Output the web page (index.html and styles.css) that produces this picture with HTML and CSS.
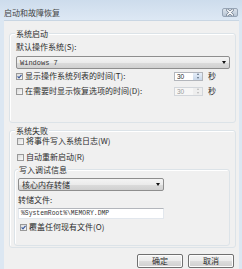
FILE: index.html
```html
<!DOCTYPE html>
<html lang="zh-CN">
<head>
    <meta charset="UTF-8">
    <title>启动和故障恢复</title>
    <link rel="stylesheet" href="styles.css">
</head>
<body>
    <div class="window">
        <div class="titlebar">
            <span class="title">启动和故障恢复</span>
            <span class="close">
                <svg width="10" height="7" viewBox="0 0 10 7">
                    <path d="M2.5 1 L7.5 6 M7.5 1 L2.5 6" stroke="#6f7d8e" stroke-width="2.6" stroke-linecap="round"/>
                    <path d="M2.5 1 L7.5 6 M7.5 1 L2.5 6" stroke="#ffffff" stroke-width="1.3" stroke-linecap="round"/>
                </svg>
            </span>
        </div>

        <div class="client">
            <!-- system startup -->
            <div class="group startup">
                <div class="group-title">系统启动</div>
                <div class="label first">默认操作系统(S):</div>
                <div class="combo wide">
                    <span class="mono">Windows 7</span>
                    <span class="arrow"></span>
                </div>
                <div class="row r1">
                    <span class="check checked">
                        <svg width="5" height="5" viewBox="0 0 5 5"><path d="M0.6 2.4 L2 3.9 L4.5 0.8" fill="none" stroke="#3b5a9c" stroke-width="1.2"/></svg>
                    </span>
                    <span class="row-text">显示操作系统列表的时间(T):</span>
                    <span class="spin">
                        <span class="spin-value">30</span>
                        <span class="spin-btns"><span class="up"></span><span class="down"></span></span>
                    </span>
                    <span class="unit">秒</span>
                </div>
                <div class="row r2">
                    <span class="check"></span>
                    <span class="row-text">在需要时显示恢复选项的时间(D):</span>
                    <span class="spin disabled">
                        <span class="spin-value">30</span>
                        <span class="spin-btns"><span class="up"></span><span class="down"></span></span>
                    </span>
                    <span class="unit">秒</span>
                </div>
            </div>

            <!-- system failure -->
            <div class="group failure">
                <div class="group-title">系统失败</div>
                <div class="row f1">
                    <span class="check"></span>
                    <span class="row-text">将事件写入系统日志(W)</span>
                </div>
                <div class="row f2">
                    <span class="check"></span>
                    <span class="row-text">自动重新启动(R)</span>
                </div>

                <div class="group debug">
                    <div class="group-title">写入调试信息</div>
                    <div class="combo narrow">
                        <span class="combo-text">核心内存转储</span>
                        <span class="arrow"></span>
                    </div>
                    <div class="label dump">转储文件:</div>
                    <div class="textbox"><span class="mono small">%SystemRoot%\MEMORY.DMP</span></div>
                    <div class="row f3">
                        <span class="check checked">
                            <svg width="5" height="5" viewBox="0 0 5 5"><path d="M0.6 2.4 L2 3.9 L4.5 0.8" fill="none" stroke="#3b5a9c" stroke-width="1.2"/></svg>
                        </span>
                        <span class="row-text">覆盖任何现有文件(O)</span>
                    </div>
                </div>
            </div>

            <div class="buttons">
                <button class="btn">确定</button>
                <button class="btn">取消</button>
            </div>
        </div>
    </div>
</body>
</html>
```
FILE: styles.css
```css
* {
    box-sizing: border-box;
}
body {
    margin: 0;
    font-family: "Noto Sans CJK SC", "Liberation Sans", sans-serif;
    font-size: 8px;
    color: #2c2c2c;
}
.window {
    width: 242px;
    height: 269px;
    overflow: hidden;
    display: flex;
    flex-direction: column;
    background: #dce7f2;
}
.titlebar {
    height: 20px;
    flex: none;
    display: flex;
    justify-content: space-between;
    padding: 0 4px 0 4px;
    background: linear-gradient(#cddcec, #dde8f4);
}
.title {
    line-height: 9px;
    margin-top: 8px;
    color: #444;
}
.close {
    width: 16px;
    height: 9px;
    margin-top: 8px;
    border: 1px solid #96a4b5;
    border-radius: 2px;
    background: linear-gradient(#dbe3ec, #b8c5d4);
    display: flex;
    align-items: center;
    justify-content: center;
}
.client {
    flex: 1;
    margin: 0 3px 0 4px;
    padding: 12px 3px 0 5px;
    background: #f0f0f0;
    border-top: 1px solid #c9d6e3;
}

/* group boxes */
.group {
    border: 1px solid #dce3e8;
    border-radius: 3px;
    box-shadow: inset 1px 1px 0 #fff;
    padding: 0 5px 0 6px;
}
.group-title {
    width: fit-content;
    line-height: 9px;
    margin-top: -5px;
    margin-left: -1px;
    padding: 0 1px;
    background: #f0f0f0;
}
.startup {
    padding-bottom: 26px;
}
.failure {
    margin-top: 7px;
    padding-bottom: 1px;
}
.debug {
    margin: 7px 0 0 -2px;
    padding: 0 0 13px 3px;
}
.debug .group-title {
    margin-left: 0;
}

.label {
    line-height: 10px;
}
.label.first {
    margin-top: 4px;
}
.label.dump {
    margin-top: 4px;
}

/* combo boxes */
.combo {
    height: 13px;
    margin-top: 4px;
    display: flex;
    align-items: center;
    justify-content: space-between;
    padding: 0 3px 0 3px;
    border: 1px solid #8e8e8e;
    border-radius: 2px;
    background: linear-gradient(#f4f4f4 0%, #ebebeb 50%, #dcdcdc 51%, #d0d0d0 100%);
}
.combo.narrow {
    width: 146px;
}
.combo-text {
    line-height: 10px;
}
.arrow {
    width: 0;
    height: 0;
    border-left: 2.5px solid transparent;
    border-right: 2.5px solid transparent;
    border-top: 3px solid #111;
}
.mono {
    font-family: "Liberation Mono", monospace;
    font-size: 7px;
    color: #333;
}
.mono.small {
    font-size: 6.4px;
}
.textbox {
    width: 146px;
    height: 11px;
    margin-top: 3px;
    padding-left: 2px;
    display: flex;
    align-items: center;
    background: #fff;
    border: 1px solid #e2e7ed;
    border-top-color: #b3b6bc;
}

/* checkbox rows */
.row {
    height: 10px;
    display: flex;
    align-items: center;
}
.row.r1 {
    margin-top: 2px;
}
.row.r2 {
    margin-top: 5px;
}
.row.f1 {
    margin-top: 1px;
    margin-left: 1px;
}
.row.f2 {
    margin-top: 6px;
    margin-left: 1px;
}
.row.f3 {
    margin-top: 3px;
    margin-left: 2px;
}
.check {
    width: 7px;
    height: 7px;
    flex: none;
    margin-right: 2px;
    border: 1px solid #999;
    background: linear-gradient(135deg, #dadada, #fbfbfb);
    display: flex;
    align-items: center;
    justify-content: center;
}
.row-text {
    flex: 1;
    line-height: 10px;
    white-space: nowrap;
}

/* spin boxes */
.spin {
    width: 29px;
    height: 9px;
    flex: none;
    display: flex;
    border: 1px solid #b3b6bc;
    background: #fff;
}
.spin-value {
    flex: 1;
    padding-left: 2px;
    font-size: 6.5px;
    line-height: 7px;
    font-family: "Liberation Sans", sans-serif;
}
.spin-btns {
    width: 9px;
    display: flex;
    flex-direction: column;
    background: linear-gradient(#e6eef8, #c9d8ea);
}
.spin-btns span {
    flex: 1;
    display: flex;
    align-items: center;
    justify-content: center;
}
.spin-btns .up::after {
    content: "";
    border-left: 1.5px solid transparent;
    border-right: 1.5px solid transparent;
    border-bottom: 2px solid #5a6b80;
}
.spin-btns .down::after {
    content: "";
    border-left: 1.5px solid transparent;
    border-right: 1.5px solid transparent;
    border-top: 2px solid #5a6b80;
}
.spin.disabled {
    border-color: #d2d6db;
    background: #f6f6f6;
    color: #9a9a9a;
}
.spin.disabled .spin-btns {
    background: #eeeeee;
}
.spin.disabled .spin-btns span::after {
    border-top-color: #b8b8b8;
    border-bottom-color: #b8b8b8;
}
.unit {
    width: 8px;
    margin: 0 14px 0 5px;
    line-height: 10px;
}

/* dialog buttons */
.buttons {
    display: flex;
    justify-content: flex-end;
    gap: 5px;
    margin: 6px 2px 0 0;
}
.btn {
    width: 46px;
    height: 14px;
    padding: 0;
    font-family: "Noto Sans CJK SC", sans-serif;
    font-size: 8px;
    line-height: 10px;
    color: #2c2c2c;
    border: 1px solid #707070;
    border-radius: 2px;
    background: linear-gradient(#f3f3f3 0%, #ebebeb 50%, #dddddd 51%, #cfcfcf 100%);
    box-shadow: inset 0 0 0 1px #fcfcfc;
}
```
